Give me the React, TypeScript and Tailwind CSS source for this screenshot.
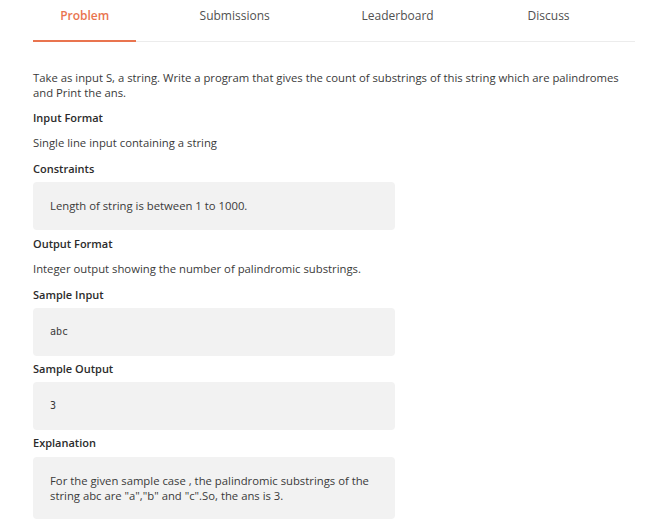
import React from "react";

const tabs = [
  { label: "Problem", w: "w-[104px]", active: true },
  { label: "Submissions", w: "w-[198px]", active: false },
  { label: "Leaderboard", w: "w-[130px]", active: false },
  { label: "Discuss", w: "w-[174px]", active: false },
];

function Heading({ children, className = "" }: { children: React.ReactNode; className?: string }) {
  return (
    <h3 className={`text-[11px] leading-[14px] font-semibold text-[#2b2b2b] ${className}`}>
      {children}
    </h3>
  );
}

function Box({ children, className = "" }: { children: React.ReactNode; className?: string }) {
  return (
    <div className={`w-[362px] rounded-[4px] bg-[#f2f2f2] px-[17px] text-[#3a3a3a] ${className}`}>
      {children}
    </div>
  );
}

export default function App() {
  return (
    <div
      className="min-h-[525px] w-[657px] bg-white text-[#3a3a3a]"
      style={{ fontFamily: "'Open Sans', sans-serif" }}
    >
      {/* Tabs */}
      <div className="ml-[33px] mr-[22px] flex h-[42px] border-b border-[#ececec]">
        {tabs.map((t) => (
          <div
            key={t.label}
            className={`${t.w} relative flex justify-center pt-[8px] text-[12px] leading-[16px] ${
              t.active ? "font-semibold text-[#e9744f]" : "text-[#505050]"
            }`}
          >
            {t.label}
            {t.active && (
              <span className="absolute bottom-[-1px] left-0 right-0 h-[2px] bg-[#e9744f]" />
            )}
          </div>
        ))}
      </div>

      <div className="px-[33px] text-[11.3px]">
        <p className="mt-[28px] leading-[15px] whitespace-nowrap">
          Take as input S, a string. Write a program that gives the count of substrings of this string which are palindromes
          <br />
          and Print the ans.
        </p>

        <Heading className="mt-[11px]">Input Format</Heading>
        <p className="mt-[11px] leading-[14px]">Single line input containing a string</p>

        <Heading className="mt-[12px]">Constraints</Heading>
        <Box className="mt-[6px] flex h-[48px] items-center">
          <span className="leading-[14px]">Length of string is between 1 to 1000.</span>
        </Box>

        <Heading className="mt-[7px]">Output Format</Heading>
        <p className="mt-[11px] leading-[14px]">Integer output showing the number of palindromic substrings.</p>

        <Heading className="mt-[12px]">Sample Input</Heading>
        <Box className="mt-[6px] flex h-[48px] items-center">
          <span className="text-[10px] leading-[12px]" style={{ fontFamily: "'DejaVu Sans Mono', monospace" }}>
            abc
          </span>
        </Box>

        <Heading className="mt-[6px]">Sample Output</Heading>
        <Box className="mt-[6px] flex h-[48px] items-center">
          <span className="text-[10px] leading-[12px]" style={{ fontFamily: "'DejaVu Sans Mono', monospace" }}>
            3
          </span>
        </Box>

        <Heading className="mt-[6px]">Explanation</Heading>
        <Box className="mt-[7px] h-[62px] pt-[16px] leading-[15px]">
          For the given sample case , the palindromic substrings of the
          <br />
          string abc are "a","b" and "c".So, the ans is 3.
        </Box>
      </div>
    </div>
  );
}
